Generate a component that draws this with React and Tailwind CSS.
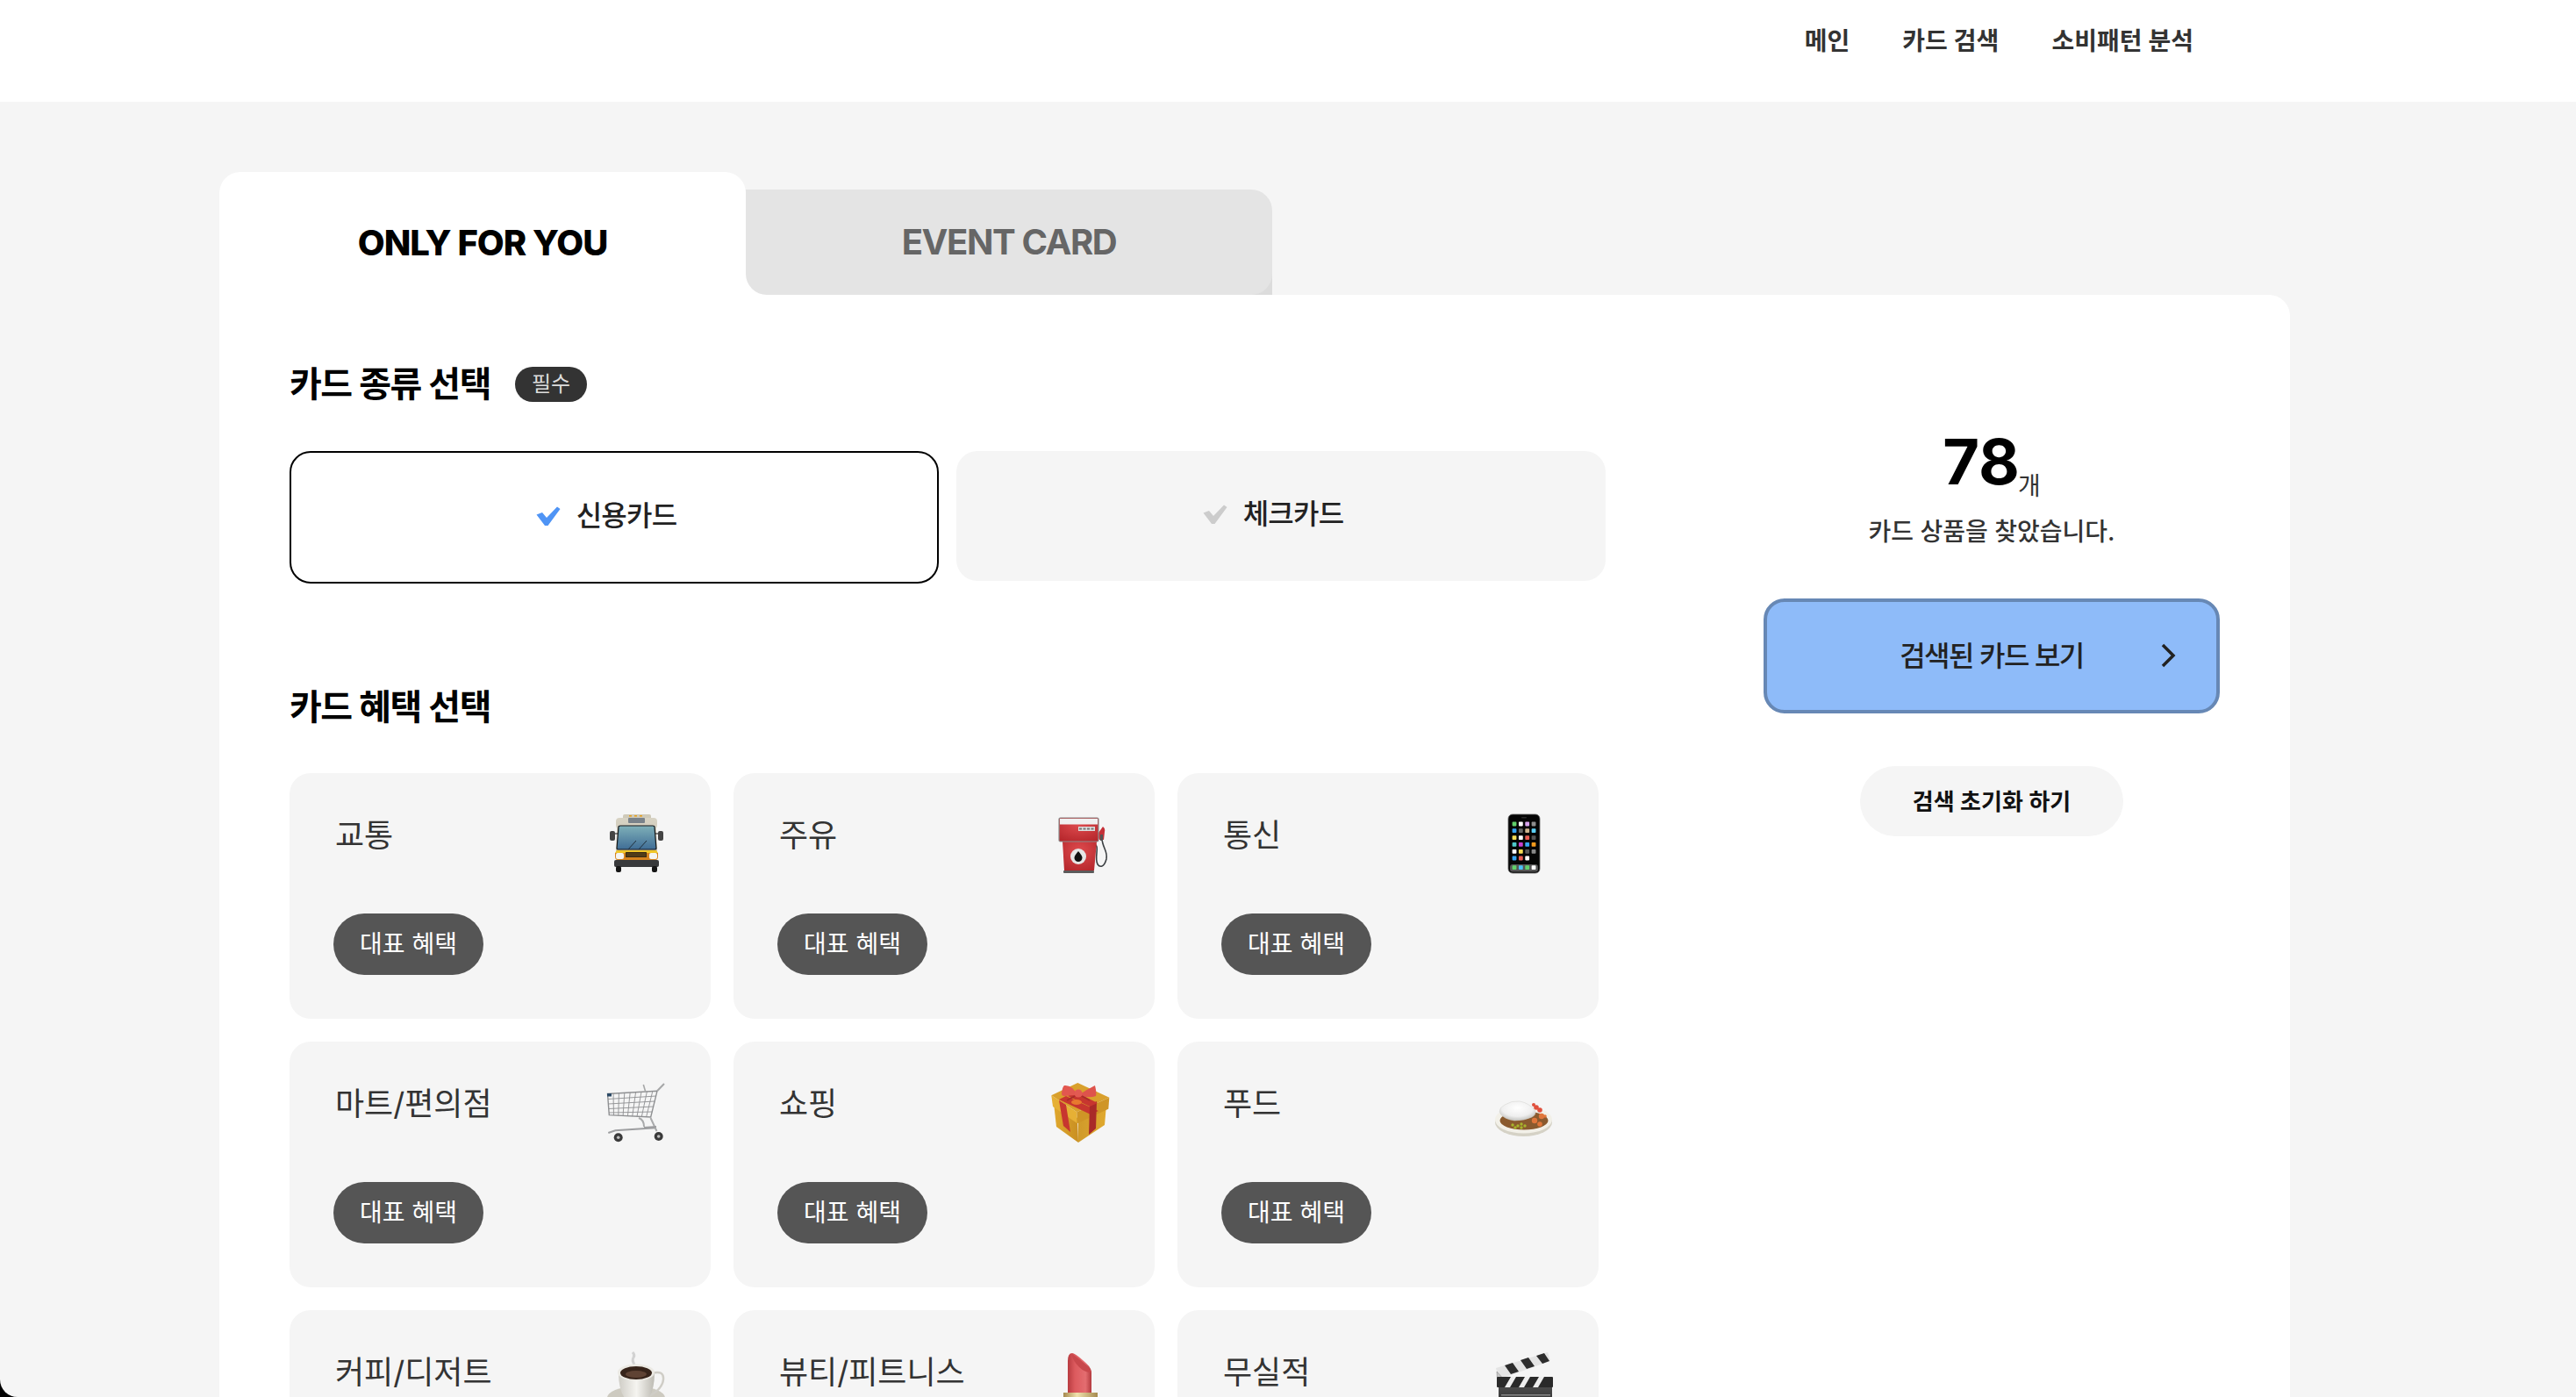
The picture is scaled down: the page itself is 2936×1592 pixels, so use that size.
import React from "react";

const Ico = ({ children }) => (
  <svg viewBox="0 0 72 72" className="w-[72px] h-[72px] shrink-0 mt-[44px] mr-[49px]">{children}</svg>
);

const Bus = () => (
  <Ico>
    <defs>
      <linearGradient id="busGlass" x1="0" y1="0" x2="0" y2="1"><stop offset="0" stopColor="#7fb0b8" /><stop offset="1" stopColor="#3f6d96" /></linearGradient>
      <linearGradient id="busBody" x1="0" y1="0" x2="0" y2="1"><stop offset="0" stopColor="#d8d3c4" /><stop offset="1" stopColor="#c7c1ae" /></linearGradient>
    </defs>
    <rect x="21" y="3" width="32" height="6" rx="2" fill="#cfcab9" />
    <path d="M13 11q0-4 4-4h39q4 0 4 4v3q0 3-1 5l1 27H13l1-27q-1-2-1-5z" fill="url(#busBody)" />
    <rect x="27" y="7" width="19" height="6" rx="1" fill="#79828a" />
    <rect x="28" y="4" width="3" height="1.6" fill="#e5a123" /><rect x="34" y="4" width="3" height="1.6" fill="#e5a123" /><rect x="40" y="4" width="3" height="1.6" fill="#e5a123" />
    <rect x="6" y="22" width="6" height="11" rx="2" fill="#444" /><rect x="61" y="22" width="6" height="11" rx="2" fill="#444" />
    <path d="M12 25h3M58 25h3" stroke="#555" strokeWidth="1.5" />
    <path d="M16 17q0-1 2-1h37q2 0 2 1l2 25q0 1-2 1H16q-2 0-2-1z" fill="url(#busGlass)" stroke="#14181c" strokeWidth="1.2" />
    <path d="M27 43l9-10M39 43l9-10" stroke="#20303c" strokeWidth="1" />
    <path d="M14 44h45l2 3H12z" fill="#f0c628" />
    <path d="M12 47h49v4q0 4-3 4H15q-3 0-3-4z" fill="#d6831f" />
    <rect x="24" y="46" width="24" height="6" rx="0.5" fill="#3a2a12" />
    <path d="M25 48h22M25 50h22" stroke="#8a6a2a" strokeWidth="0.6" />
    <rect x="13" y="47" width="9" height="7" rx="2" fill="#f4f4f2" /><rect x="51" y="47" width="9" height="7" rx="2" fill="#f4f4f2" />
    <rect x="11" y="55" width="51" height="8" rx="2" fill="#38393b" />
    <rect x="13" y="62" width="6" height="7" rx="2" fill="#151515" /><rect x="54" y="62" width="6" height="7" rx="2" fill="#151515" />
  </Ico>
);

const Fuel = () => (
  <Ico>
    <defs>
      <radialGradient id="fuelRed" cx="0.5" cy="0.3" r="0.8"><stop offset="0" stopColor="#dd4a4d" /><stop offset="1" stopColor="#b5262b" /></radialGradient>
    </defs>
    <path d="M53 37q3 1 2 10t1 13q2 3 5 2t5-8q1-5-2-12t-3-12" fill="none" stroke="#3b3f42" strokeWidth="1.6" />
    <path d="M57 24l5-7q3 2 2 6l-1 9h-5l-2-4z" fill="#c53038" /><rect x="59" y="26" width="3" height="7" fill="#555" />
    <path d="M16 34h39l-3 33H18z" fill="url(#fuelRed)" />
    <rect x="12" y="7" width="45" height="27" rx="1.5" fill="url(#fuelRed)" stroke="#8d8d8d" strokeWidth="1.2" />
    <rect x="13" y="8" width="43" height="6.5" fill="#f0f0f0" />
    <rect x="34" y="17" width="19" height="5" fill="#dcdcdc" />
    <path d="M35 19.5h17" stroke="#777" strokeWidth="2" strokeDasharray="3 1.5" />
    <circle cx="34" cy="51" r="9" fill="#e6e6e6" />
    <path d="M34 45q4.500 5 4.500 7.500a4.500 4.500 0 0 1-9 0q0-2.500 4.500-7.500z" fill="#111" />
    <rect x="17" y="67" width="35" height="3" rx="1" fill="#5b5b5b" />
  </Ico>
);

const Phone = () => {
  const rows = [
    [25, 14, ["#61d06a", "#fff", "#d7a3ec", "#8d8d8d"]],
    [25, 21.7, ["#37a5f4", "#666", "#cdb48e", "#5cd0f5"]],
    [25, 29.7, ["#f6dc55", "#fff", "#e85c52", "#555"]],
    [25, 37.3, ["#4ec9cc", "#c63fcf", "#37a5f4", "#f39a1d"]],
    [25, 45.3, ["#fff", "#f6dc55", "#555", "#888"]],
    [25, 53, ["#37a5f4", "#e85c52", "#fff", null]],
    [25, 63.7, ["#61d06a", "#4dc1f5", "#61d06a", "#fff"]],
  ];
  return (
    <Ico>
      <rect x="18" y="3" width="36" height="67" rx="5" fill="#050505" stroke="#666" strokeWidth="0.8" />
      <rect x="33" y="6" width="6" height="1.6" rx="0.8" fill="#2a2a2a" />
      <rect x="20" y="60" width="32" height="8.500" rx="3" fill="#555" />
      {rows.map(([x, y, cs], i) =>
        cs.map((c, j) => c && <rect key={i + "-" + j} x={x + j * 7.35 - 2.4} y={y - 2.4} width="4.800" height="4.800" rx="0.8" fill={c} />)
      )}
    </Ico>
  );
};

const Cart = () => {
  const v = [0, 1, 2, 3, 4, 5, 6, 7];
  return (
    <Ico>
      <g stroke="#8f9092" fill="none">
        <path d="M3.500 15.500L60 12.300 52.700 42 5.300 39.700z" strokeWidth="1.400" />
        {v.map((i) => (
          <path key={i} d={`M${10 + i * 6.4} ${15 - i * 0.35}L${10.500 + i * 5.3} ${40 + i * 0.28}`} strokeWidth="0.900" />
        ))}
        <path d="M4 21.500L59 18M4.300 27L57.500 24M4.600 32.500L56 30M5 37L54.500 36" strokeWidth="0.900" />
        <path d="M60 12.300L68 4" strokeWidth="2" stroke="#a6a7a8" />
        <path d="M44.300 5L47 14" strokeWidth="1.600" stroke="#a6a7a8" />
        <path d="M4.300 60l8-2.700 46-3" strokeWidth="2" stroke="#9d9ea0" />
        <path d="M39 43q6 2 6 10M52.500 43l7 15" strokeWidth="2" stroke="#a9aaab" />
        <path d="M45 54l14-1" strokeWidth="2" stroke="#9d9ea0" />
      </g>
      <rect x="3" y="15" width="5" height="3.500" fill="#2c4a66" />
      <circle cx="15.700" cy="65.300" r="5" fill="#3a3a3a" /><circle cx="15.700" cy="65.300" r="1.800" fill="#bdbdbd" />
      <circle cx="61.700" cy="64" r="5" fill="#3a3a3a" /><circle cx="61.700" cy="64" r="1.800" fill="#bdbdbd" />
    </Ico>
  );
};

const Gift = () => (
  <Ico>
    <defs>
      <linearGradient id="giftL" x1="0" y1="0" x2="1" y2="0"><stop offset="0" stopColor="#e0a82e" /><stop offset="1" stopColor="#c98f22" /></linearGradient>
      <linearGradient id="giftR" x1="0" y1="0" x2="1" y2="0"><stop offset="0" stopColor="#d09a2a" /><stop offset="1" stopColor="#e0a92f" /></linearGradient>
    </defs>
    <path d="M6 26l27 17 1 28L9 53z" fill="url(#giftL)" />
    <path d="M34 43l32-15-2 23-30 20z" fill="url(#giftR)" />
    <path d="M3.300 17.300L33.300 3l36 16.700L32.300 36.300z" fill="#d9a02c" />
    <path d="M3.300 17.300l29 19 .5 13L5 30z" fill="#e6b035" />
    <path d="M32.300 36.300l37-16.600-1 13-35.500 16.500z" fill="#cf9526" />
    <path d="M12 22l8-4 37 17-9 4zM12 23l8 5 5 31-8-7z" fill="#c7362f" />
    <path d="M47 28l8-4-1 31-8 7z" fill="#a92a28" />
    <path d="M22 18l8-5 26 13-9 4z" fill="#c7362f" />
    <ellipse cx="32" cy="25" rx="6" ry="3" fill="#e8792e" />
    <path d="M33 17q-6-12-15-11-2 1-3 9 0 3 3 3 9-1 15-1z" fill="#e2574f" />
    <path d="M34 17q9-6 19-11 2 8 1 12-8 3-20-1z" fill="#de534c" />
    <circle cx="34" cy="15" r="4.500" fill="#e25a52" />
    <path d="M30 18l-9 5M38 18l9 5" stroke="#a72d2a" strokeWidth="2" />
  </Ico>
);

const Curry = () => (
  <Ico>
    <defs><radialGradient id="rice" cx="0.5" cy="0.35" r="0.62"><stop offset="0" stopColor="#ffffff" /><stop offset="0.7" stopColor="#efefef" /><stop offset="1" stopColor="#c9c9c6" /></radialGradient></defs>
    <ellipse cx="35.500" cy="48" rx="32.500" ry="16" fill="#d5d2c6" />
    <ellipse cx="35.500" cy="45" rx="32.500" ry="15.500" fill="#f2f0e8" />
    <ellipse cx="36" cy="46" rx="27.500" ry="10.500" fill="#8a5a2e" />
    <path d="M8 36q0-5 6-8 8-5 17-4 11 2 17 10 3 5-3 8-8 4-20 4-14-2-17-10z" fill="url(#rice)" stroke="#d2d2cf" strokeWidth="0.500" />
    <circle cx="50" cy="31" r="2.800" fill="#e04f3c" /><circle cx="54" cy="34" r="2.800" fill="#e04f3c" /><circle cx="47" cy="28" r="2" fill="#e04f3c" />
    <circle cx="56" cy="41" r="3.200" fill="#e0763a" /><circle cx="48" cy="46" r="3.200" fill="#e0763a" /><circle cx="54" cy="50" r="2.800" fill="#e0763a" /><circle cx="60" cy="41" r="1.800" fill="#e0763a" />
    <circle cx="23" cy="51" r="1.700" fill="#a8b42c" /><circle cx="26" cy="54" r="1.700" fill="#a8b42c" /><circle cx="29" cy="52" r="1.700" fill="#a8b42c" /><circle cx="33" cy="50" r="1.700" fill="#a8b42c" /><circle cx="33" cy="54" r="1.700" fill="#a8b42c" /><circle cx="37" cy="52" r="1.700" fill="#a8b42c" />
  </Ico>
);

const Coffee = () => (
  <Ico>
    <defs><linearGradient id="cup" x1="0" y1="0" x2="1" y2="0"><stop offset="0" stopColor="#cfcdc6" /><stop offset="0.5" stopColor="#f5f4f0" /><stop offset="1" stopColor="#bcbab2" /></linearGradient></defs>
    <path d="M32 4q3 3 1 6t1 8" stroke="#c9c9c9" strokeWidth="3" fill="none" opacity="0.8" />
    <ellipse cx="36" cy="56" rx="33" ry="13" fill="#cdcac0" />
    <path d="M54 28q14-4 13 7-1 12-20 21" fill="none" stroke="#cfcdc6" strokeWidth="2.500" />
    <path d="M16 27q0 26 12 34h18q11-9 11-34z" fill="url(#cup)" />
    <ellipse cx="36" cy="27" rx="21" ry="9.500" fill="#eceae4" />
    <ellipse cx="36" cy="27.500" rx="18" ry="7.500" fill="#37241a" />
    <ellipse cx="36" cy="29" rx="12" ry="4" fill="#5f4334" />
  </Ico>
);

const Lipstick = () => (
  <Ico>
    <defs>
      <linearGradient id="lip" x1="0" y1="0" x2="1" y2="0"><stop offset="0" stopColor="#b83b40" /><stop offset="0.3" stopColor="#dc5a5e" /><stop offset="0.75" stopColor="#e46d70" /><stop offset="1" stopColor="#b23a3e" /></linearGradient>
      <linearGradient id="gold" x1="0" y1="0" x2="1" y2="0"><stop offset="0" stopColor="#a58a4e" /><stop offset="0.4" stopColor="#f0e2ae" /><stop offset="1" stopColor="#a58a4e" /></linearGradient>
    </defs>
    <path d="M22 14q0-9 5-9 3 0 12 8 9 7 10 13v26H22z" fill="url(#lip)" />
    <path d="M26 6q2 0 13 9 9 7 10 12-8 0-14-6-7-7-9-15z" fill="#c8484c" />
    <rect x="17" y="50" width="39" height="22" fill="url(#gold)" />
  </Ico>
);

const Clapper = () => (
  <Ico>
    <defs><linearGradient id="clap" x1="0" y1="0" x2="0" y2="1"><stop offset="0" stopColor="#4a4a4a" /><stop offset="1" stopColor="#262626" /></linearGradient></defs>
    <path d="M4 22L63 4l3 10-59 21z" fill="#e4e4e4" />
    <path d="M14 19l9-3 7 10-9 3zM32 13l9-3 7 10-9 3zM50 8l9-3 6 9-8 3z" fill="#2d2d2d" />
    <path d="M5 26l8 9-1 8H6z" fill="#c9c9c9" stroke="#888" strokeWidth="0.6" />
    <circle cx="9" cy="34" r="1.500" fill="#888" />
    <rect x="5" y="32" width="64" height="12" rx="1" fill="#2a2a2a" />
    <path d="M14 44l7-12h6l-7 12zM30 44l7-12h6l-7 12zM46 44l7-12h6l-7 12z" fill="#eee" />
    <rect x="7" y="44" width="61" height="28" fill="url(#clap)" />
    <rect x="10" y="52" width="56" height="1.500" fill="#888" />
  </Ico>
);

const items = [
  ["교통", Bus, true],
  ["주유", Fuel, true],
  ["통신", Phone, true],
  ["마트/편의점", Cart, true],
  ["쇼핑", Gift, true],
  ["푸드", Curry, true],
  ["커피/디저트", Coffee, false],
  ["뷰티/피트니스", Lipstick, false],
  ["무실적", Clapper, false],
];

const Check = ({ color }) => (
  <svg viewBox="0 0 28 22" className="w-[28px] h-[22px]">
    <path d="M0.500 9.500L7 7l5 6L24 0.500 27.500 3 13.500 22h-3.500z" fill={color} />
  </svg>
);

export default function App() {
  return (
    <div className="w-[2936px] h-[1592px] bg-black">
      <div className="w-full h-full overflow-hidden rounded-bl-[20px] bg-[#f5f5f5] font-['Inter','Noto_Sans_CJK_KR',sans-serif]">
        <header className="h-[116px] bg-white flex justify-end gap-[60px] pr-[436px] pt-[27px] text-[28px] leading-[40px] font-semibold text-[#333]">
          <span>메인</span>
          <span>카드 검색</span>
          <span>소비패턴 분석</span>
        </header>

        <div className="ml-[250px] w-[2360px] pt-[80px]">
          <div className="flex items-end">
            <div className="w-[600px] h-[140px] bg-white rounded-t-[24px] flex items-center justify-center pt-[22px] text-[40px] font-extrabold tracking-[-1px] text-black">
              ONLY FOR YOU
            </div>
            <div className="w-[600px] h-[120px] bg-[linear-gradient(90deg,#fff_50%,#dcdcdc_50%)] bg-[length:100%_50%] bg-bottom bg-no-repeat">
              <div className="h-full bg-[#e4e4e4] rounded-tr-[24px] rounded-b-[24px] flex items-center justify-center text-[40px] font-bold tracking-[-1.400px] text-[#666]">
                EVENT CARD
              </div>
            </div>
          </div>

          <div className="bg-white rounded-tr-[24px] flex pl-[80px] pr-[80px] h-[1300px]">
            <div className="w-[1500px]">
              <div className="flex items-center gap-[28px] pt-[56px] h-[148px]">
                <h2 className="text-[40px] leading-[56px] font-semibold tracking-[-1.500px] text-black">카드 종류 선택</h2>
                <span className="w-[82px] h-[40px] rounded-full bg-[#333] text-[#ddd] text-[24px] flex items-center justify-center">필수</span>
              </div>
              <div className="flex gap-[20px] items-start mt-[30px]">
                <div className="w-[740px] h-[151px] rounded-[24px] border-2 border-black bg-white flex items-center justify-center gap-[18px] pr-[18px] pb-[4px] text-[32px] tracking-[-0.800px] font-medium text-[#222]">
                  <Check color="#4f94f5" />
                  <span>신용카드</span>
                </div>
                <div className="w-[740px] h-[148px] rounded-[24px] bg-[#f5f5f5] flex items-center justify-center gap-[18px] pr-[18px] pb-[4px] text-[32px] tracking-[-0.800px] font-medium text-[#222]">
                  <Check color="#cccccc" />
                  <span>체크카드</span>
                </div>
              </div>

              <h2 className="mt-[113px] text-[40px] leading-[56px] font-semibold tracking-[-1.500px] text-black">카드 혜택 선택</h2>

              <div className="mt-[47px] grid grid-cols-[480px_480px_480px] gap-[26px]">
                {items.map(([label, Icon, pill]) => (
                  <div key={label} className="h-[280px] rounded-[24px] bg-[#f5f5f5] flex flex-col justify-between">
                    <div className="flex justify-between items-start">
                      <span className="pl-[52px] pt-[46px] text-[36px] leading-[50px] text-[#333]">{label}</span>
                      <Icon />
                    </div>
                    {pill && <span className="self-start ml-[50px] mb-[50px] w-[171px] h-[70px] rounded-full bg-[#555] text-white text-[28px] flex items-center justify-center">대표 혜택</span>}
                  </div>
                ))}
              </div>
            </div>

            <div className="ml-[180px] w-[520px] flex flex-col items-center pt-[152px]">
              <div className="flex items-end h-[76px]">
                <span className="text-[72px] leading-[76px] font-bold text-black">78</span>
                <span className="text-[28px] leading-[36px] text-[#333] -mb-[8px] -ml-[2px]">개</span>
              </div>
              <p className="mt-[22px] text-[28px] leading-[40px] font-medium text-[#333]">카드 상품을 찾았습니다.</p>
              <div className="relative mt-[56px] w-[520px] h-[131px] rounded-[24px] border-4 border-[#6788b5] bg-[#8ebbf9] flex items-center justify-center text-[32px] tracking-[-1.500px] font-medium text-[#222]">
                <span>검색된 카드 보기</span>
                <svg viewBox="0 0 18 28" className="absolute right-[46px] top-[47px] w-[18px] h-[28px]">
                  <path d="M3 2l12 12L3 26" fill="none" stroke="#222" strokeWidth="3.500" />
                </svg>
              </div>
              <div className="mt-[60px] w-[300px] h-[80px] rounded-full bg-[#f5f5f5] flex items-center justify-center text-[26px] font-semibold text-[#111]">검색 초기화 하기</div>
            </div>
          </div>
        </div>
      </div>
    </div>
  );
}
